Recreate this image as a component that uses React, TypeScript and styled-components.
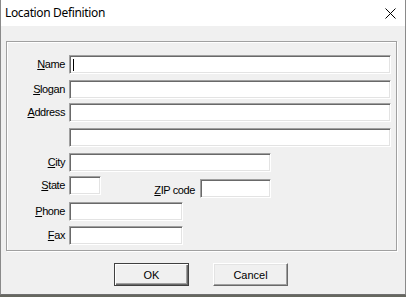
import React from "react";
import styled, { createGlobalStyle } from "styled-components";

const Global = createGlobalStyle`
  html, body { margin: 0; padding: 0; background: #66675f; }
  body { width: 406px; height: 297px; overflow: hidden; }
  * { box-sizing: border-box; }
`;

const Window = styled.div`
  width: 406px;
  height: 295px;
  background: #f0f0f0;
  border-left: 1px solid #8a8a8a;
  border-right: 1px solid #8a8a8a;
  border-bottom: 1px solid #6f6f6f;
  display: flex;
  flex-direction: column;
`;

const TitleBar = styled.div`
  height: 26px;
  background: #ffffff;
  display: flex;
  align-items: center;
  justify-content: space-between;
  padding: 0 9px 0 4px;
`;

const Title = styled.span`
  font-family: "Noto Sans", "Liberation Sans", sans-serif;
  font-size: 12px;
  letter-spacing: -0.35px;
  line-height: 26px;
  color: #000;
`;

const CloseButton = styled.div`
  width: 12px;
  height: 12px;
  display: flex;
  align-items: center;
  justify-content: center;
`;

const Group = styled.div`
  margin: 15px 0 0 5px;
  width: 391px;
  height: 210px;
  border: 1px solid #a0a0a0;
  box-shadow: 1px 1px 0 #ffffff, inset 1px 1px 0 #ffffff;
  display: flex;
  flex-direction: column;
  padding-top: 13px;
`;

const Row = styled.div<{ $mt?: number }>`
  display: grid;
  grid-template-columns: 58px auto;
  column-gap: 4px;
  align-items: start;
  margin-top: ${(p) => p.$mt ?? 0}px;
`;

const Label = styled.span<{ $mt?: number }>`
  font-family: "Liberation Sans", Arial, sans-serif;
  font-size: 11px;
  letter-spacing: -0.4px;
  line-height: 19px;
  color: #000;
  text-align: right;
  white-space: nowrap;
  margin-top: ${(p) => p.$mt ?? 0}px;
`;

const Field = styled.div<{ $w: number; $mt?: number }>`
  width: ${(p) => p.$w}px;
  height: 19px;
  background: #ffffff;
  border: 1px solid;
  border-color: #a0a0a0 #ffffff #ffffff #a0a0a0;
  box-shadow: inset 1px 1px 0 #696969, inset -1px -1px 0 #e3e3e3;
  display: flex;
  align-items: center;
  padding-left: 3px;
  margin-top: ${(p) => p.$mt ?? 0}px;
`;

const Caret = styled.span`
  width: 1px;
  height: 12px;
  background: #000;
`;

const StateLine = styled.div`
  width: 202px;
  display: flex;
  align-items: flex-start;
`;

const ZipGroup = styled.div`
  margin-left: auto;
  display: flex;
  align-items: flex-start;
  gap: 5px;
`;

const Footer = styled.div`
  margin-top: 12px;
  display: flex;
  justify-content: center;
  gap: 24px;
  padding-right: 4px;
`;

const Button = styled.div<{ $default?: boolean }>`
  width: 75px;
  height: 23px;
  background: #f0f0f0;
  font-family: "Liberation Sans", Arial, sans-serif;
  font-size: 11px;
  color: #000;
  display: flex;
  align-items: center;
  justify-content: center;
  border: 1px solid;
  border-color: ${(p) =>
    p.$default ? "#404040" : "#ffffff #696969 #696969 #ffffff"};
  box-shadow: ${(p) =>
    p.$default
      ? "inset 1px 1px 0 #ffffff, inset -1px -1px 0 #696969, inset -2px -2px 0 #a0a0a0"
      : "inset -1px -1px 0 #a0a0a0, inset 1px 1px 0 #e3e3e3"};
`;

const CloseIcon = () => (
  <svg width="11" height="11" viewBox="0 0 11 11">
    <path d="M0.5 0.5 L10.5 10.5 M10.5 0.5 L0.5 10.5" stroke="#000" strokeWidth="1" fill="none" />
  </svg>
);

export default function App() {
  return (
    <>
      <Global />
      <Window>
        <TitleBar>
          <Title>Location Definition</Title>
          <CloseButton>
            <CloseIcon />
          </CloseButton>
        </TitleBar>
        <Group>
          <Row>
            <Label>
              <u>N</u>ame
            </Label>
            <Field $w={322}>
              <Caret />
            </Field>
          </Row>
          <Row $mt={6}>
            <Label>
              <u>S</u>logan
            </Label>
            <Field $w={322} />
          </Row>
          <Row $mt={4}>
            <Label>
              <u>A</u>ddress
            </Label>
            <Field $w={322} />
          </Row>
          <Row $mt={6}>
            <span />
            <Field $w={322} />
          </Row>
          <Row $mt={6}>
            <Label>
              <u>C</u>ity
            </Label>
            <Field $w={202} />
          </Row>
          <Row $mt={4}>
            <Label>
              <u>S</u>tate
            </Label>
            <StateLine>
              <Field $w={32} />
              <ZipGroup>
                <Label $mt={5}>
                  <u>Z</u>IP code
                </Label>
                <Field $w={71} $mt={3} />
              </ZipGroup>
            </StateLine>
          </Row>
          <Row $mt={2}>
            <Label>
              <u>P</u>hone
            </Label>
            <Field $w={114} />
          </Row>
          <Row $mt={5}>
            <Label>
              <u>F</u>ax
            </Label>
            <Field $w={114} />
          </Row>
        </Group>
        <Footer>
          <Button $default>OK</Button>
          <Button>Cancel</Button>
        </Footer>
      </Window>
    </>
  );
}
